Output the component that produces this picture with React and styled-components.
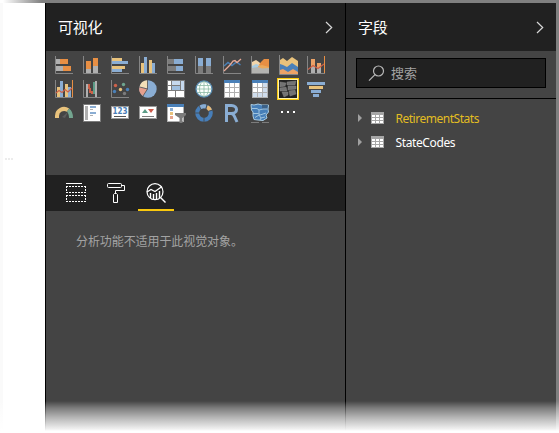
import React from 'react';
import styled, { createGlobalStyle } from 'styled-components';

const Global = createGlobalStyle`
  * { box-sizing: border-box; }
  body { margin: 0; background: #fff; overflow: hidden; font-family: "Noto Sans", "Noto Sans CJK SC", sans-serif; }
  svg { display: block; flex: none; }
`;

const Window = styled.div`
  position: relative;
  width: 559px;
  height: 433px;
  display: grid;
  grid-template-columns: 45px 300px 211px 3px;
  grid-template-rows: 3px 430px;
  background: #fff;
  overflow: hidden;
`;
const TopEdge = styled.div`
  grid-column: 1 / -1;
  background: linear-gradient(90deg, #fff 3px, #808080 42px);
`;
const RightEdge = styled.div`
  background: #808080;
`;
const Canvas = styled.div`
  border-left: 3px solid #fafafa;
  padding: 155px 0 0 2px;
`;
const Marks = styled.div`
  display: flex;
  gap: 1px;
  height: 2px;
`;
const Mark = styled.i`
  width: 2px;
  background: #ececec;
`;
const Pane = styled.section`
  display: flex;
  flex-direction: column;
  background: #444;
  border-left: 1px solid #000;
`;
const Header = styled.header`
  height: 48px;
  flex: none;
  display: flex;
  align-items: center;
  justify-content: space-between;
  padding: 0 12px;
  background: #212121;
`;
const Title = styled.h1`
  margin: 0;
  font: 400 15px/22px "Noto Sans CJK SC", sans-serif;
  letter-spacing: -0.2px;
  color: #fff;
`;
const Gallery = styled.div`
  height: 124px;
  flex: none;
  display: grid;
  grid-template-columns: repeat(10, 18px);
  grid-auto-rows: 18px;
  gap: 6px 10px;
  padding: 5px 0 0 9px;
`;
const Tabs = styled.nav`
  height: 36px;
  flex: none;
  display: flex;
  gap: 4px;
  padding-left: 12px;
  background: #212121;
`;
const Tab = styled.div`
  width: 36px;
  display: flex;
  justify-content: center;
  padding-top: 8px;
  border-bottom: 2px solid ${(p) => (p.$active ? '#f9c80e' : 'transparent')};
`;
const Notice = styled.p`
  margin: 21px 0 0 30px;
  font: 400 12px/18px "Noto Sans CJK SC", sans-serif;
  letter-spacing: -0.08px;
  color: #a3a3a3;
`;
const SearchArea = styled.div`
  height: 48px;
  flex: none;
  padding: 7px 10px 0;
  border-bottom: 1px solid #000;
`;
const Search = styled.div`
  height: 30px;
  display: flex;
  align-items: center;
  gap: 6px;
  padding-left: 11px;
  background: #212121;
  border: 1px solid #000;
  font: 400 13px/20px "Noto Sans CJK SC", sans-serif;
  color: #a3a3a3;
`;
const Fields = styled.div`
  padding: 7px 0 0 12px;
`;
const Field = styled.div`
  height: 24px;
  display: flex;
  align-items: center;
  color: ${(p) => (p.$active ? '#e2bd22' : '#fff')};
`;
const FieldName = styled.span`
  margin-left: 11.5px;
  padding-top: 1px;
  font: 400 12px/18px "Noto Sans", sans-serif;
  letter-spacing: ${(p) => p.$track}px;
`;
const Fade = styled.div`
  position: absolute;
  left: 0;
  right: 0;
  bottom: 0;
  height: 32px;
  background: linear-gradient(180deg, rgba(255,255,255,0) 0, rgba(255,255,255,.3) 7px, rgba(255,255,255,.62) 17px, rgba(255,255,255,.92) 28px, #fff 30px);
`;

const B = '#8aadd3', O = '#e88f44', Y = '#e8c27c', G = '#b0b0b0', D = '#7c7c7c', S = '#4a80b8';

const Icon = ({ children }) => (
  <svg width="18" height="18" viewBox="0 0 18 18" overflow="visible">{children}</svg>
);
const R = ({ x, y, w, h, c }) => <rect x={x} y={y} width={w} height={h} fill={c} />;
const Axes = () => <path d="M.5 0V17.5H18" fill="none" stroke="#858585" />;
const Bars = ({ data, right, edge = true }) => (
  <Icon>
    {data.map(([x, y, x2, y2, c], i) => <R key={i} x={x} y={y} w={x2 - x} h={y2 - y} c={c} />)}
    <Axes />
    {right && edge && <R x={17} y={0} w={1} h={17} c={O} />}
    {right && <path d={right} fill="none" stroke="#cc6047" strokeWidth="1.1" />}
  </Icon>
);
const Table = ({ soft }) => (
  <Icon>
    <R x={1} y={0} w={16} h={18} c={G} /><R x={1} y={0} w={16} h={3} c={S} />
    {[[3, 4], [8, 4], [13, 4]].map(([y, h], r) => [[2, 4], [7, 4], [12, 4]].map(([x, w], c) => (
      <R key={x + '-' + y} x={x} y={y} w={w} h={h} c={soft && (c === 2 || r === 2) ? '#cfdded' : '#fff'} />
    )))}
  </Icon>
);

const Visuals = () => (
  <>
    <Bars data={[[1, 3, 5, 8, G], [5, 3, 13, 8, O], [1, 10, 8, 15, G], [8, 10, 16, 15, O]]} />
    <Bars data={[[3, 5, 8, 13, O], [3, 13, 8, 17, G], [10, 2, 15, 10, O], [10, 10, 15, 17, G]]} />
    <Bars data={[[1, 2, 11, 5, Y], [1, 5, 17, 8, B], [1, 10, 14, 13, Y], [1, 13, 11, 16, B]]} />
    <Bars data={[[2, 7, 5, 17, Y], [5, 1, 8, 17, B], [10, 4, 13, 17, Y], [13, 7, 16, 17, B]]} />
    <Bars data={[[1, 3, 7, 8, D], [7, 3, 16, 8, B], [1, 10, 9, 15, D], [9, 10, 16, 15, B]]} />
    <Bars data={[[3, 2, 8, 10, B], [3, 10, 8, 17, D], [11, 2, 16, 10, B], [11, 10, 16, 17, D]]} />
    <Icon><Axes /><path d="M1 10L5 6.5 9 9.5 13.5 6 17.5 9" fill="none" stroke={S} strokeWidth="1.4" /><path d="M1 15L7 9 10 5 12 4.5 14 6.5 18 3" fill="none" stroke="#e9aa98" strokeWidth="1.3" /></Icon>
    <Icon><path d="M1 6L5 4 8 6 11 9 1 13Z" fill="#f1d5ab" /><path d="M7 10L10 6 13 3H18V13H7Z" fill={O} /><path d="M1 10L5 8 8 9 11 12 1 13Z" fill="#a9cce2" /><path d="M7 10L11 9 18 11V13H7Z" fill="#eba95c" /><path d="M1 12L7 11 11 12.5 18 12V17H1Z" fill="#b4b4b1" /><Axes /></Icon>
    <Icon><path d="M1 4L4 2 8 5 13 1 19 5V12H1Z" fill={Y} /><path d="M1 8L4 9 8 11 13 7 19 11V18H1Z" fill={S} /><path d="M1 14L4 13 9 16 14 13 19 16V18H1Z" fill="#eca267" /><path d="M.5 -1V18.5H19" fill="none" stroke="#858585" /></Icon>
    <Bars data={[[4, 3, 8, 11, '#eca267'], [4, 11, 8, 17, G], [10, 7, 14, 12, '#eca267'], [10, 12, 14, 17, G]]} right="M1 13.5L6 9.5 11 12.5 17 8" />

    <Bars data={[[2, 7, 5, 17, Y], [5, 1, 8, 17, B], [10, 4, 13, 17, Y], [13, 7, 16, 17, B]]} right="M1 13L4 10.5 7 12.5 10 9.5 13 12 17 8" />
    <Bars data={[[3, 4, 5, 17, G], [5, 4, 7, 9, '#cc6047'], [6, 8, 8, 13, '#cc6047'], [8, 11, 10, 14, '#cc6047'], [10, 2, 12, 14, '#5c9c87'], [12, 1, 14, 17, G]]} />
    <Icon><Axes />{[[4, 5, '#cf624a'], [12, 4, '#6ea58f'], [9, 9, Y], [3, 11, S], [16, 9, S], [13, 13, D]].map(([x, y, c]) => <circle key={x} cx={x + .5} cy={y + .5} r="1.7" fill={c} />)}</Icon>
    <Icon><circle cx="9" cy="9" r="8.7" fill={B} /><path d="M8.5 8.5V.3A8.7 8.7 0 0 0 .4 7Z" fill="#f3dfb8" /><path d="M8.5 9L.4 7A8.7 8.7 0 0 0 4 16Z" fill="#e6a08e" /><path d="M8.5 0V9L4 16M8.5 9L0 6.8" fill="none" stroke="#505050" strokeWidth=".8" /></Icon>
    <Icon><R x={0} y={0} w={18} h={18} c={D} /><R x={1} y={1} w={3} h={4} c="#fff" /><R x={1} y={6} w={3} h={4} c="#fff" /><R x={5} y={1} w={8} h={4} c="#c6d9ee" /><R x={14} y={1} w={3} h={9} c="#c6d9ee" /><R x={5} y={6} w={8} h={4} c="#9fbfe0" /><R x={1} y={11} w={7} h={6} c="#fff" /><R x={9} y={11} w={8} h={6} c="#fff" /></Icon>
    <Icon><circle cx="9" cy="9" r="8" fill="#fbfffc" stroke="#5689b0" strokeWidth="1.3" /><path d="M9 1.5V16.5M1.5 9H16.5M2.5 5.5H15.5M2.5 12.5H15.5" stroke="#8bb9a3" strokeWidth=".8" fill="none" /><ellipse cx="9" cy="9" rx="4.5" ry="7.5" fill="none" stroke="#8bb9a3" strokeWidth=".8" /></Icon>
    <Table />
    <Table soft />
    <Icon><rect x="-1.5" y="-1.5" width="21" height="21" fill="#222" stroke="#f9c80e" /><rect x="-.5" y="-.5" width="19" height="19" fill="none" stroke="#fff4ae" /><path d="M1 2L7 3 6 6 1 7ZM8 2L17 1 16 5 8 5ZM1 8L7 7 8 11 1 11ZM9 6H17V9L9 10ZM3 12H9V15L5 17ZM10 11L16 10 17 14 11 16Z" fill="#737373" stroke="#858585" strokeWidth=".5" /></Icon>
    <Icon><R x={0} y={2} w={18} h={3} c={B} /><R x={2} y={6} w={14} h={3} c={Y} /><R x={4} y={10} w={10} h={3} c={B} /><R x={6} y={14} w={6} h={3} c={B} /></Icon>

    <Icon><path d="M2 14V12A7 7 0 0 1 13 6.2" fill="none" stroke={Y} strokeWidth="4" /><path d="M13 6.2Q16 8.5 16 14" fill="none" stroke="#73a58f" strokeWidth="4" /><path d="M7 13L13 8 10 14Z" fill="#5c5c5c" /></Icon>
    <Icon><rect x=".5" y=".5" width="17" height="17" fill="#fff" stroke={D} /><R x={2} y={2} w={3} h={14} c={G} /><R x={7} y={2} w={6} h={2} c={B} /><R x={7} y={5} w={3} h={1} c={G} /><R x={7} y={8} w={6} h={2} c={B} /><R x={7} y={11} w={3} h={1} c={G} /></Icon>
    <Icon><rect x=".5" y="2.5" width="17" height="12" fill="#fff" stroke="#999" /><text x="9" y="10.2" textAnchor="middle" fontFamily="DejaVu Sans" fontWeight="bold" fontSize="8" textLength="15" lengthAdjust="spacingAndGlyphs" fill={S}>123</text><R x={3} y={12} w={12} h={1} c="#555" /></Icon>
    <Icon><rect x=".5" y="2.5" width="17" height="12" fill="#fff" stroke="#999" /><path d="M3 9L6 5 9 9Z" fill="#5c9c87" /><path d="M9 5H15L12 9Z" fill="#cc5949" /><R x={3} y={12} w={12} h={1} c={D} /></Icon>
    <Icon><R x={0} y={0} w={17} h={18} c={G} /><R x={0} y={0} w={17} h={3} c={S} /><R x={1} y={3} w={15} h={14} c="#fff" /><R x={3} y={4} w={3} h={3} c={B} /><R x={3} y={8} w={3} h={3} c={Y} /><R x={3} y={12} w={3} h={3} c="#e6a58e" /><path d="M8 9H19V11L15.5 14V19H12.5V14L8 11Z" fill={D} /></Icon>
    <Icon><circle cx="9" cy="9" r="6.8" fill="none" stroke="#477eb8" strokeWidth="4" /><path d="M5 3.5A6.8 6.8 0 0 1 11 2.5" fill="none" stroke={B} strokeWidth="4" /><path d="M12 3A6.8 6.8 0 0 1 15.2 6.3" fill="none" stroke="#e9b975" strokeWidth="4" /><path d="M4 1L6 5.5M12 0L11 5M12.5 7.5L18 6M9 13V18M0 9H5" stroke="#444" strokeWidth=".8" /></Icon>
    <Icon><path d="M3.5 18V1.5H8.5C15.2 1.5 15.2 9.5 8.5 9.5H3.5M8 9.5Q10.2 9.5 11.5 12.5L14 18" fill="none" stroke={B} strokeWidth="3" /></Icon>
    <Icon><path d="M0 .5L3 1 7 0 11 1H17.5L17 5 17.5 8 15 11 16 14 12 16.5 7 16 3 15.5 2 12 2 8 .5 6Z" fill="#477fb8" stroke="#a9cce2" /><path d="M11 1H17L16 5H11Z" fill="#3b6188" /><path d="M1 4.5L6 4.5 8 6 12 5H16M2 9.5H7L9 11 15 9M8 6V10M4 13.5L8 11 10 14 14 13M10 14L9 16" fill="none" stroke="#a9cce2" strokeWidth=".9" /><path d="M0 18.5H8M11 18.5H18" stroke={D} /></Icon>
    <Icon>{[2, 8, 14].map((x) => <R key={x} x={x} y={7} w={2} h={2} c="#fff" />)}</Icon>
  </>
);

const Chevron = () => <svg width="8" height="14" viewBox="0 0 8 14"><path d="M1 2L6.7 7.5 1 13" fill="none" stroke="#d8d8d8" strokeWidth="1.2" /></svg>;
const Rows = () => <svg width="20" height="20" viewBox="0 0 20 20" fill="none" stroke="#fff"><path d="M0 .5H16" /><path d="M0 3.5H20M0 9.5H20M0 12.5H20M0 18.5H20" strokeDasharray="2 1" /><path d="M.5 3V10M19.5 3V10M.5 12V19M19.5 12V19" strokeDasharray="2 1" /></svg>;
const Roller = () => <svg width="20" height="21" viewBox="0 0 20 21" fill="none" stroke="#fff"><rect x="1.5" y=".5" width="14" height="4" rx="1" /><path d="M16 2.5H18.5V7.5H9.5V10.5M7.5 11.5L8.5 10.5H10.5L11.5 11.5V19.5H7.5Z" /></svg>;
const Analytics = () => <svg width="21" height="21" viewBox="0 0 21 21" fill="none" stroke="#fff" strokeWidth="1.2"><circle cx="9" cy="8.7" r="8" /><path d="M1 9L5 6.5 9 8.5 16 3.5" /><path d="M4.5 10V15M7.5 11V16.5M10.5 10V16.5M13.5 8V15" strokeWidth="1.4" /><path d="M14.5 14.5L19.5 19.5" strokeWidth="1.4" /></svg>;
const Magnifier = () => <svg width="17" height="17" viewBox="0 0 17 17" fill="none" stroke="#b7b7b7" strokeWidth="1.2"><circle cx="10.5" cy="6" r="5" /><path d="M7 9.7L1 15.7" /></svg>;
const Expander = () => <svg width="4" height="8" viewBox="0 0 4 8"><path d="M0 0L4 4 0 8Z" fill="#a0a0a0" /></svg>;
const FieldTable = styled(({ className }) => (
  <svg className={className} width="13" height="12" viewBox="0 0 13 12">
    <R x={0} y={0} w={13} h={12} c="#a6a6a6" />
    {[3, 6, 9].map((y) => [1, 5, 9].map((x) => <R key={x + '-' + y} x={x} y={y} w={3} h={2} c="#fff" />))}
  </svg>
))`
  margin-left: 9px;
`;

export default function App() {
  return (
    <Window>
      <Global />
      <TopEdge />
      <Canvas><Marks><Mark /><Mark /><Mark /></Marks></Canvas>
      <Pane>
        <Header><Title>可视化</Title><Chevron /></Header>
        <Gallery><Visuals /></Gallery>
        <Tabs><Tab><Rows /></Tab><Tab><Roller /></Tab><Tab $active><Analytics /></Tab></Tabs>
        <Notice>分析功能不适用于此视觉对象。</Notice>
      </Pane>
      <Pane>
        <Header><Title>字段</Title><Chevron /></Header>
        <SearchArea><Search><Magnifier />搜索</Search></SearchArea>
        <Fields>
          <Field $active><Expander /><FieldTable /><FieldName $track={-0.48}>RetirementStats</FieldName></Field>
          <Field><Expander /><FieldTable /><FieldName $track={-0.38}>StateCodes</FieldName></Field>
        </Fields>
      </Pane>
      <RightEdge />
      <Fade />
    </Window>
  );
}
